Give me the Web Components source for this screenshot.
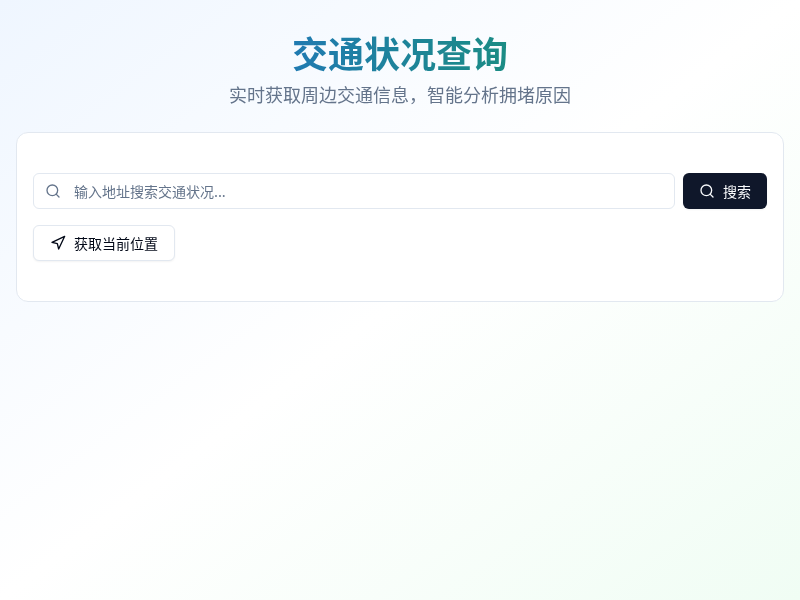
<!DOCTYPE html>
<html lang="zh">
<head>
<meta charset="utf-8">
<title>交通状况查询</title>
<style>
html, body { margin: 0; height: 100%; }
body {
	font-family: "Noto Sans CJK SC", sans-serif;
	color: #020817;
	background: linear-gradient(to bottom right, #eff6ff, #ffffff, #f0fdf4);
}
</style>
</head>
<body>
<traffic-app></traffic-app>

<script>
const ICONS = {
	search: '<circle cx="11" cy="11" r="8"></circle><path d="m21 21-4.3-4.3"></path>',
	navigation: '<polygon points="3 11 22 2 13 21 11 13 3 11"></polygon>'
};

class AppIcon extends HTMLElement {
	connectedCallback() {
		this.attachShadow({ mode: 'open' });
		this.shadowRoot.innerHTML = `
			<style>
				:host { display: block; width: 16px; height: 16px; flex: none; }
				svg { display: block; width: 16px; height: 16px; fill: none; stroke: currentColor;
					stroke-width: 2; stroke-linecap: round; stroke-linejoin: round; }
			</style>
			<svg viewBox="0 0 24 24">${ICONS[this.getAttribute('name')]}</svg>
		`;
	}
}

class PageHeader extends HTMLElement {
	constructor() {
		super();
		this.attachShadow({ mode: 'open' });
		this.shadowRoot.innerHTML = `
			<style>
				:host { display: block; text-align: center; margin-bottom: 24px; }
				h1 {
					margin: 0 0 8px;
					font-size: 36px;
					line-height: 40px;
					font-weight: 700;
					background: linear-gradient(to right, #2563eb, #16a34a);
					-webkit-background-clip: text;
					background-clip: text;
					color: transparent;
				}
				p { margin: 0; font-size: 18px; line-height: 28px; color: #64748b; }
			</style>
			<h1><slot name="title"></slot></h1>
			<p><slot name="subtitle"></slot></p>
		`;
	}
}

class AppButton extends HTMLElement {
	constructor() {
		super();
		this.attachShadow({ mode: 'open' });
		this.shadowRoot.innerHTML = `
			<style>
				:host { display: inline-block; flex: none; }
				button {
					display: flex;
					align-items: center;
					gap: 8px;
					height: 36px;
					padding: 0 16px;
					box-sizing: border-box;
					font: 400 14px/20px "Noto Sans CJK SC", sans-serif;
					border-radius: 6px;
					border: 1px solid #e2e8f0;
					background: #fff;
					color: #020817;
					box-shadow: 0 1px 2px rgba(0, 0, 0, .05);
				}
				:host([primary]) button {
					background: #0f172a;
					border: none;
					color: #f8fafc;
				}
			</style>
			<button type="button"><slot></slot></button>
		`;
	}
}

class SearchBox extends HTMLElement {
	constructor() {
		super();
		this.attachShadow({ mode: 'open' });
		this.shadowRoot.innerHTML = `
			<style>
				:host { display: flex; flex: 1; position: relative; align-items: center; color: #64748b; }
				app-icon { position: absolute; left: 12px; top: 10px; }
				input {
					flex: 1;
					min-width: 0;
					height: 36px;
					box-sizing: border-box;
					padding: 0 12px 0 40px;
					border: 1px solid #e2e8f0;
					border-radius: 6px;
					background: #fff;
					color: #020817;
					font: 14px/20px "Noto Sans CJK SC", sans-serif;
					outline: none;
				}
				input::placeholder { color: #64748b; opacity: 1; }
			</style>
			<app-icon name="search"></app-icon>
			<input type="text" placeholder="输入地址搜索交通状况...">
		`;
	}
}

class SearchCard extends HTMLElement {
	constructor() {
		super();
		this.attachShadow({ mode: 'open' });
		this.shadowRoot.innerHTML = `
			<style>
				:host {
					display: flex;
					flex-direction: column;
					gap: 16px;
					padding: 40px 16px;
					background: #fff;
					border: 1px solid #e2e8f0;
					border-radius: 12px;
				}
				.row { display: flex; gap: 8px; }
			</style>
			<div class="row">
				<search-box></search-box>
				<app-button primary><app-icon name="search"></app-icon>搜索</app-button>
			</div>
			<div class="row">
				<app-button><app-icon name="navigation"></app-icon>获取当前位置</app-button>
			</div>
		`;
	}
}

class TrafficApp extends HTMLElement {
	constructor() {
		super();
		this.attachShadow({ mode: 'open' });
		this.shadowRoot.innerHTML = `
			<style>
				:host { display: block; padding: 32px 16px; will-change: transform; }
			</style>
			<page-header>
				<span slot="title">交通状况查询</span>
				<span slot="subtitle">实时获取周边交通信息，智能分析拥堵原因</span>
			</page-header>
			<search-card></search-card>
		`;
	}
}

customElements.define('app-icon', AppIcon);
customElements.define('page-header', PageHeader);
customElements.define('app-button', AppButton);
customElements.define('search-box', SearchBox);
customElements.define('search-card', SearchCard);
customElements.define('traffic-app', TrafficApp);
</script>
</body>
</html>
